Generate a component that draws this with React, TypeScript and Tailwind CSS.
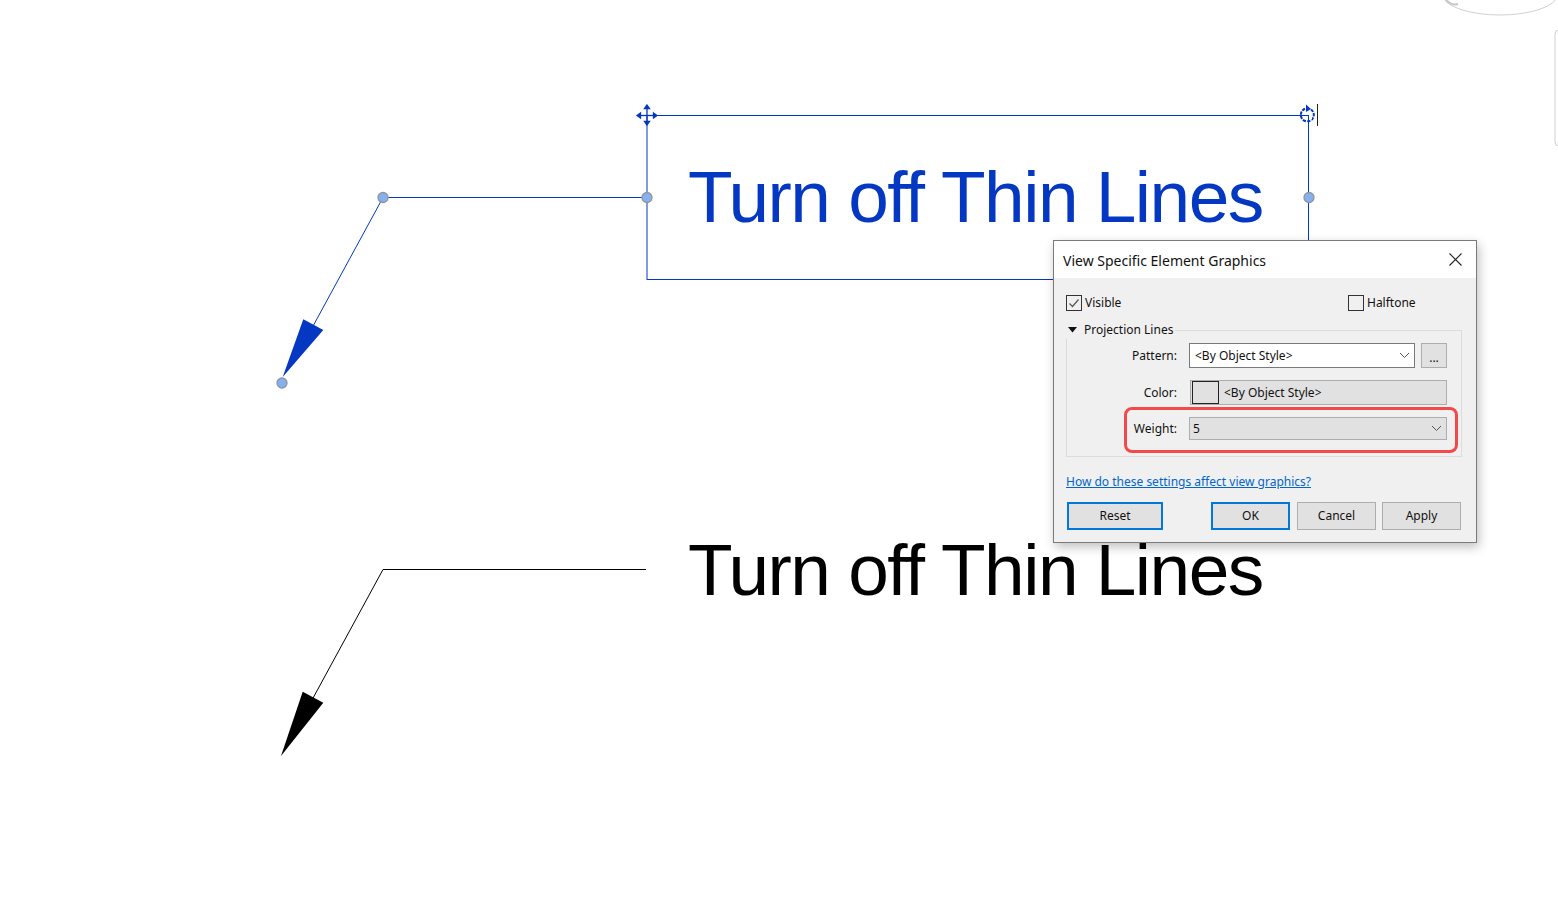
import React from 'react';

const BLUE = '#0437c2';

function Chevron() {
  return (
    <svg width="11" height="7" viewBox="0 0 11 7" className="shrink-0">
      <path d="M1 1 L5.5 5.5 L10 1" fill="none" stroke="#555" strokeWidth="1" />
    </svg>
  );
}

function Canvas() {
  return (
    <svg width="1558" height="910" className="absolute inset-0">
      {/* blue (selected) text note */}
      <rect x="647" y="115.5" width="661.5" height="164" fill="none" stroke={BLUE} strokeWidth="1" />
      <polyline points="647,197.5 383,197.5 300,350" fill="none" stroke={BLUE} strokeWidth="1" />
      <polygon points="282.7,377 303.3,319.3 323.3,330" fill={BLUE} />

      {/* move handle */}
      <g stroke={BLUE} strokeWidth="1.3" fill={BLUE}>
        <line x1="647" y1="107" x2="647" y2="123" />
        <line x1="639" y1="115.5" x2="655" y2="115.5" />
        <polygon points="647,105 644.5,108.5 649.5,108.5" />
        <polygon points="647,125 644.5,121.5 649.5,121.5" />
        <polygon points="637,115.5 640.5,113 640.5,118" />
        <polygon points="657,115.5 653.5,113 653.5,118" />
      </g>
      {/* rotate handle */}
      <g fill="none" stroke={BLUE} strokeWidth="2">
        <path d="M1311 109.5 A6.5 6.5 0 1 1 1305 108.8" strokeDasharray="3.2 1.2" />
      </g>
      <polygon points="1306,104.5 1311,109 1306,112" fill={BLUE} />
      <rect x="1308" y="115.5" width="4" height="4" fill="white" />
      <line x1="1308.5" y1="115" x2="1308.5" y2="122" stroke={BLUE} strokeWidth="1" />
      <line x1="1317.5" y1="104" x2="1317.5" y2="126" stroke="#222" strokeWidth="1" />

      {/* grips */}
      {[
        [383, 197.5],
        [647, 197.5],
        [1309, 197.5],
        [282, 383],
      ].map(([cx, cy], i) => (
        <circle key={i} cx={cx} cy={cy} r="5" fill="#86b0f0" stroke="#8f959e" strokeWidth="1.3" />
      ))}

      {/* black (plain) text note */}
      <polyline points="646,569.5 383,569.5 300,722" fill="none" stroke="#000" strokeWidth="1" />
      <polygon points="281,756 302.7,691.7 323.3,702.7" fill="#000" />

      {/* view cube / nav bar edges */}
      <ellipse cx="1500" cy="-6" rx="58" ry="21" fill="none" stroke="#d0d0d0" strokeWidth="1" />
      <path d="M1446 0 Q1452 6 1458 4" fill="none" stroke="#c8c8c8" strokeWidth="2" />
      <rect x="1555" y="30" width="12" height="116" rx="4" fill="none" stroke="#cfcfcf" strokeWidth="1" />
    </svg>
  );
}

function Checkbox({ checked }: { checked?: boolean }) {
  return (
    <span className="w-[16px] h-[16px] border border-[#333] flex items-center justify-center shrink-0">
      {checked && (
        <svg width="12" height="12" viewBox="0 0 12 12">
          <path d="M1.5 6.5 L4.5 9.5 L10.5 2.5" fill="none" stroke="#555" strokeWidth="1.2" />
        </svg>
      )}
    </span>
  );
}

function Dialog() {
  return (
    <div className="absolute left-[1053px] top-[240px] w-[424px] h-[303px] border border-[#7a7a7a] bg-[#f0f0f0] shadow-[2px_4px_10px_rgba(0,0,0,0.25)] flex flex-col text-[12px] text-[#111] font-['Noto_Sans',sans-serif]">
      {/* title bar */}
      <div className="h-[37px] bg-white flex items-center justify-between pl-[9px] pr-[14px] shrink-0">
        <span className="text-[14px] text-[#111] mt-[2px]">View Specific Element Graphics</span>
        <svg width="13" height="13" viewBox="0 0 13 13">
          <path d="M0.5 0.5 L12.5 12.5 M12.5 0.5 L0.5 12.5" stroke="#222" strokeWidth="1.1" />
        </svg>
      </div>

      <div className="flex flex-col pl-[12px] pr-[15px]">
        {/* visible / halftone */}
        <div className="mt-[17px] h-[16px] flex items-center">
          <div className="flex items-center gap-[3px] w-[282px]">
            <Checkbox checked />
            <span>Visible</span>
          </div>
          <div className="flex items-center gap-[3px]">
            <Checkbox />
            <span>Halftone</span>
          </div>
        </div>

        {/* projection lines group */}
        <fieldset className="mt-[10px] h-[136px] border border-[#dcdcdc] pl-0 pr-[14px] flex flex-col">
          <legend className="flex items-center gap-[7px] pr-[2px] ml-[-1px]">
            <svg width="9" height="6" viewBox="0 0 9 6" className="ml-[2px]">
              <polygon points="0,0 9,0 4.5,5.5" fill="#111" />
            </svg>
            <span>Projection Lines</span>
          </legend>

          <div className="flex items-center mt-[4px] h-[25px]">
            <span className="w-[110px] text-right">Pattern:</span>
            <div className="ml-[12px] w-[226px] h-[25px] bg-white border border-[#7a7a7a] flex items-center justify-between pl-[5px] pr-[4px]">
              <span>&lt;By Object Style&gt;</span>
              <Chevron />
            </div>
            <div className="ml-[6px] w-[26px] h-[25px] bg-[#e1e1e1] border border-[#adadad] flex items-end justify-center pb-[3px] leading-none">
              ...
            </div>
          </div>

          <div className="flex items-center mt-[12px] h-[25px]">
            <span className="w-[110px] text-right">Color:</span>
            <div className="ml-[13px] w-[257px] h-[25px] bg-[#e1e1e1] border border-[#adadad] flex items-center pl-[1px]">
              <span className="w-[27px] h-[23px] border border-[#222] bg-[#e1e1e1]" />
              <span className="ml-[5px]">&lt;By Object Style&gt;</span>
            </div>
          </div>

          <div className="relative flex items-center mt-[12px] h-[23px]">
            <span className="w-[110px] text-right">Weight:</span>
            <div className="ml-[12px] w-[258px] h-[23px] bg-[#e1e1e1] border border-[#adadad] flex items-center justify-between pl-[3px] pr-[4px]">
              <span>5</span>
              <Chevron />
            </div>
            {/* red highlight */}
            <div className="absolute left-[57px] top-[-10px] w-[334px] h-[46px] border-[3px] border-[#f24a4a] rounded-[8px]" />
          </div>
        </fieldset>

        <a className="mt-[17px] text-[#0066cc] underline leading-[16px]">How do these settings affect view graphics?</a>

        {/* buttons */}
        <div className="mt-[12px] flex items-center h-[28px] pl-[1px]">
          <button className="w-[96px] h-[28px] bg-[#e1e1e1] border-2 border-[#0078d7]">Reset</button>
          <button className="ml-[48px] w-[79px] h-[28px] bg-[#e1e1e1] border-2 border-[#0078d7]">OK</button>
          <button className="ml-[7px] w-[79px] h-[28px] bg-[#e1e1e1] border border-[#adadad]">Cancel</button>
          <button className="ml-[6px] w-[79px] h-[28px] bg-[#e1e1e1] border border-[#adadad]">Apply</button>
        </div>
      </div>
    </div>
  );
}

export default function App() {
  return (
    <div className="relative w-[1558px] h-[910px] bg-white overflow-hidden">
      <Canvas />

      <div className="absolute left-[688px] top-[161px] text-[73px] leading-[72px] tracking-[-1.5px] whitespace-nowrap font-['Liberation_Sans',Arial,sans-serif] text-[#0437c2]">
        Turn off Thin Lines
      </div>
      <div className="absolute left-[688px] top-[534px] text-[73px] leading-[72px] tracking-[-1.5px] whitespace-nowrap font-['Liberation_Sans',Arial,sans-serif] text-black">
        Turn off Thin Lines
      </div>

      <Dialog />
    </div>
  );
}
